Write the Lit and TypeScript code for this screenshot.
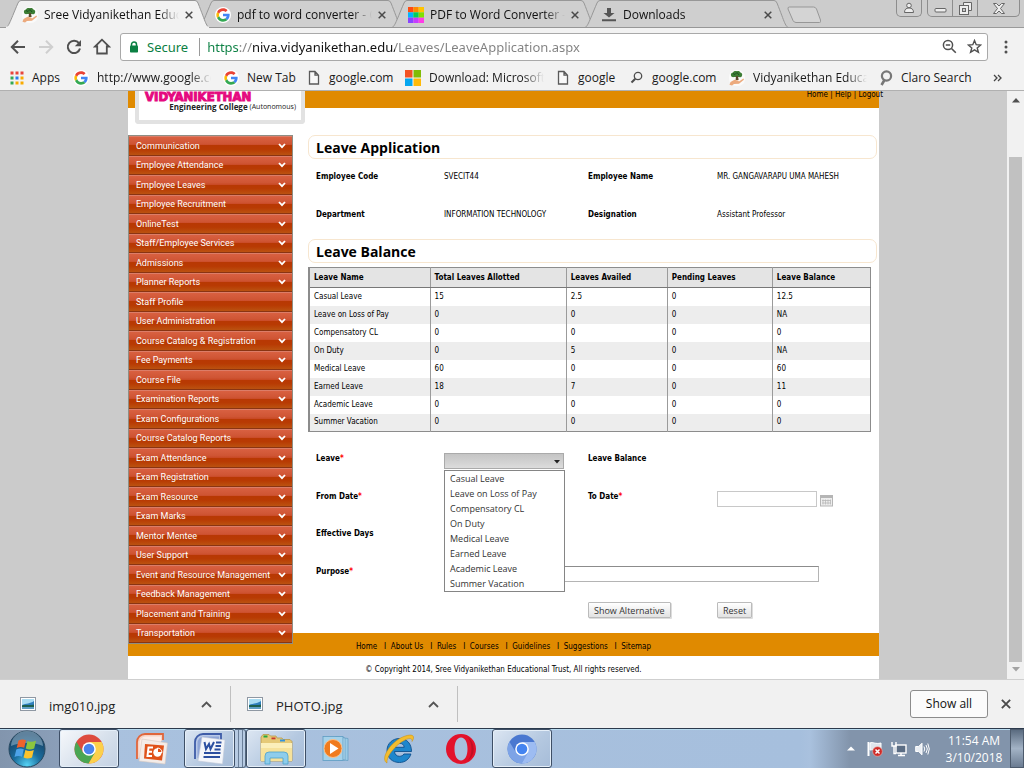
import { LitElement, html, svg, css, nothing, TemplateResult } from "lit";
import { customElement } from "lit/decorators.js";
import { classMap } from "lit/directives/class-map.js";

const icon = (w: number, h: number, box: string, body: unknown) =>
  html`<svg width=${w} height=${h} viewBox=${box} aria-hidden="true">${body}</svg>`;

const googleIcon = () => icon(16, 16, "0 0 48 48", svg`
  <circle cx="24" cy="24" r="24" fill="#fff"/>
  <path fill="#fbbc05" d="M6.3 14.7C4.800 17.500 4 20.600 4 24s.8 6.500 2.200 9.100l6.600-5.100c-.5-1.300-.8-2.600-.8-4s.3-3.200.9-4.500z"/>
  <path fill="#ea4335" d="M6.306,14.691l6.571,4.819C14.655,15.108,18.961,12,24,12c3.059,0,5.842,1.154,7.961,3.039l5.657-5.657C34.046,6.053,29.268,4,24,4C16.318,4,9.656,8.337,6.306,14.691z"/>
  <path fill="#34a853" d="M24,44c5.166,0,9.86-1.977,13.409-5.192l-6.19-5.238C29.211,35.091,26.715,36,24,36c-5.202,0-9.619-3.317-11.283-7.946l-6.522,5.025C9.505,39.556,16.227,44,24,44z"/>
  <path fill="#4285f4" d="M43.611,20.083H24v8h11.303c-0.792,2.237-2.231,4.166-4.087,5.571l6.19,5.238C36.971,39.205,44,34,44,24C44,22.659,43.862,21.35,43.611,20.083z"/>`);

const treeIcon = () => icon(16, 16, "0 0 16 16", svg`
  <rect width="16" height="16" rx="7" fill="#fafafa"/>
  <path d="M2 5.500c-.6-2 1-3 2-3 .8-1.800 3-1.800 4-1.300 1.600-.6 3 .2 3.400 1.300 1.600.4 2.200 2 1.600 3.200-.3 1.300-2 1.800-3.400 1.400H5c-1.500.3-2.800-.4-3-1.600z" fill="#3c7d34"/>
  <path d="M4 3.500l2 1 2-2 2 2.500" stroke="#1d5220" fill="none"/>
  <path d="M7 6h2l.6 4H6.600z" fill="#5b4a2c"/>
  <path d="M.5 14.800l1-2.800 4-2.200 3.500.6 1 1 4-2.600c1-.3 1.300.4.6 1.100L10 13.700l-5 .4-2 1.500z" fill="#ecaa7d"/>`);

const pageIcon = () => icon(14, 16, "0 0 14 16", svg`
  <path d="M2.500 1.500h5.500l3.500 3.700v8.800h-9zM8 1.500v3.700h3.500" fill="#f8f8f8" stroke="#5a5a5a" stroke-width="1.300"/>`);

const lensIcon = () => icon(14, 16, "0 0 14 16", svg`
  <circle cx="8" cy="6" r="3.700" fill="none" stroke="#4e4e4e" stroke-width="1.300"/>
  <path d="M5.300 8.700L1.500 12.500" stroke="#4e4e4e" stroke-width="2"/>`);

const claroIcon = () => icon(14, 16, "0 0 14 16", svg`
  <circle cx="7.500" cy="6" r="4.600" fill="none" stroke="#777" stroke-width="2.200"/>
  <path d="M5.500 10L2.500 15" stroke="#777" stroke-width="2.600"/>`);

const windowsIcon = () => icon(16, 16, "0 0 16 16", svg`
  <path fill="#f35325" d="M0 0h7.500v7.500H0z"/><path fill="#81bc06" d="M8.500 0H16v7.500H8.500z"/>
  <path fill="#05a6f0" d="M0 8.500h7.500V16H0z"/><path fill="#ffba08" d="M8.500 8.500H16V16H8.500z"/>`);

const appsIcon = () => icon(14, 14, "0 0 14 14",
  ["#e8453c", "#e8453c", "#e8453c", "#34a853", "#2a7cf0", "#f9ab00", "#34a853", "#f9ab00", "#f9ab00"].map(
    (c, i) => svg`<rect x=${(i % 3) * 5 + 0.5} y=${Math.floor(i / 3) * 5 + 0.5} width="3" height="3" fill=${c}/>`));

const mosaicIcon = () => icon(16, 16, "0 0 16 16",
  ["#ff4b12", "#ff8a00", "#ffc400", "#00b4ff", "#00cf5e", "#7fe000", "#8a44ff", "#c63cff", "#ff3ce6"].map(
    (c, i) => svg`<rect x=${(i % 3) * 5.34} y=${Math.floor(i / 3) * 5.34} width="5.340" height="5.340" fill=${c}/>`));

const downloadIcon = () => icon(16, 16, "0 0 16 16", svg`
  <path d="M6 1h4v5h3.500L8 10.500 2.500 6H6zM1 12.200h14v2H1z" fill="#555"/>`);

const closeIcon = (size = 8) => icon(size, size, "0 0 8 8", svg`
  <path d="M.7.7l6.600 6.600M7.300.7L.7 7.300" stroke="#4a4a4a" stroke-width="1.500"/>`);

const pictureIcon = () => icon(16, 14, "0 0 16 14", svg`
  <rect x=".5" y=".5" width="15" height="13" fill="#fff" stroke="#8f98a3"/>
  <rect x="2" y="2" width="12" height="10" fill="#2f7fbd"/>
  <path d="M2 2h12v2c-4 3-8 2-12 4z" fill="#a9dcf2"/>
  <path d="M2 8.500c3-1.500 7 .5 12-1V10H2z" fill="#1d5f4d"/><path d="M2 10h12v2H2z" fill="#5f9fc4"/>`);

const chromeIcon = (a: string, b: string, c: string, core: string, hub: string) => icon(30, 30, "0 0 30 30", svg`
  <circle cx="15" cy="15" r="14.500" fill=${a}/>
  <path d="M15 15L21.500 18.500 14.600 29.500A14.500 14.500 0 0 1 2.400 7.800L9 18.500z" fill=${b}/>
  <path d="M27.700 8H15l6 10.500L14.600 29.500A14.500 14.500 0 0 0 27.700 8z" fill=${c}/>
  <circle cx="15" cy="15" r="6.800" fill=${hub}/><circle cx="15" cy="15" r="5.300" fill=${core}/>`);

const orbIcon = () => icon(38, 38, "0 0 38 38", svg`
  <defs><radialGradient id="orb" cx=".5" cy=".95" r=".85"><stop offset="0" stop-color="#55d3f5"/><stop offset=".45" stop-color="#1a6e9e"/><stop offset="1" stop-color="#173f63"/></radialGradient></defs>
  <circle cx="19" cy="19" r="18" fill="url(#orb)" stroke="#27485f"/>
  <path d="M3 16a16 15 0 0 1 32 0c-8-4-24-4-32 0z" fill="#b9d4e4" opacity=".45"/>
  <path d="M10.500 10.500c3-1.500 5-1.400 7.500-.2l-1.800 7.500c-2.500-1.200-5-1-7.500.2z" fill="#f0622c"/>
  <path d="M19.500 11c3 1.300 5.500 1 8.500-.2l-1.800 7.600c-3 1.200-5.500 1.400-8.400.1z" fill="#8cc63f"/>
  <path d="M8.300 19.500c2.500-1.200 5-1.400 7.500-.2L14 26.800c-2.500-1.200-5-1-7.500.2z" fill="#4da3e8"/>
  <path d="M17.400 20c3 1.300 5.500 1.100 8.400-.1L24 27.500c-3 1.200-5.500 1.400-8.400.1z" fill="#fcc32c"/>`);

const pptIcon = () => icon(32, 32, "0 0 32 32", svg`
  <path d="M1 26V9a8 8 0 0 1 8-8h18v6" fill="#f7d3c5" stroke="#e0663c" stroke-width="1.800"/>
  <path d="M3.500 25V10a6.500 6.500 0 0 1 6-6.500h15.500V9L9 27z" fill="#fff" opacity=".6"/>
  <path d="M6 6l25.500 4-2.500 21L3 28z" fill="#f4ece8" stroke="#d9c9c1" stroke-width=".6"/>
  <path d="M9 11l19 1.500-2 15-18-2z" fill="#e0521a"/>
  <path d="M17 14.500h-4.500l-1 8.500h4.500M12.500 18.700h3.500" fill="none" stroke="#fff" stroke-width="2"/>
  <circle cx="21.500" cy="19.500" r="4.200" fill="#fff"/><path d="M21.500 19.500V15a4.500 4.500 0 0 1 4.500 4.500z" fill="#e0521a" stroke="#fff"/>`);

const wordIcon = () => icon(32, 32, "0 0 32 32", svg`
  <path d="M1 26V9a8 8 0 0 1 8-8h18v6" fill="#b9c9e8" stroke="#3e5ca8" stroke-width="1.800"/>
  <path d="M3.500 25V10a6.500 6.500 0 0 1 6-6.500h15.500V9L9 27z" fill="#6f8cc9" opacity=".6"/>
  <path d="M8 4l23 3-2.500 24L4 28z" fill="#f4f6fa" stroke="#c3cad8" stroke-width=".6"/>
  <path d="M10.500 9l1.500 7 3-5 1.500 5 3.500-7" fill="none" stroke="#2b4fa0" stroke-width="2"/>
  <path d="M22 9.500h5.500M21.500 13H27M20.500 16.500h6M10 20h16.500M9.500 24h16.500" stroke="#2b4fa0" stroke-width="2"/>`);

const folderIcon = () => icon(34, 32, "0 0 34 32", svg`
  <path d="M2 4l2-2.500h6L11.500 3H17l1 2h5l1 1.500h7l2 2V28H2z" fill="#e5c977" stroke="#b99a4a" stroke-width=".8"/>
  <path d="M4.500 2.500h4v2h-4z" fill="#25a83a"/><path d="M12.500 4.500h4v1.800h-4z" fill="#c8392b"/><path d="M21 6.500h5v2h-5z" fill="#3494dd"/>
  <path d="M2 10h31v18H2z" fill="#f6e29b"/><path d="M2 10h31v5H2z" fill="#fbefba"/>
  <path d="M6 31v-8a4 4 0 0 1 4-4h15a4 4 0 0 1 4 4v8h-5v-6H11v6z" fill="#8ecdec" stroke="#4da1cc" stroke-width=".8"/>`);

const mediaIcon = () => icon(30, 28, "0 0 30 28", svg`
  <path d="M16 2l10 1.500v22l-10-1z" fill="#9ccbe6" stroke="#5e9cc2" stroke-width=".7"/>
  <path d="M14 1.500l9 1.500v22l-9-1z" fill="#b7dcf0" stroke="#5e9cc2" stroke-width=".7"/>
  <rect x="1" y="1.500" width="20" height="24" fill="#a5d2ea" stroke="#5e9cc2" stroke-width=".8"/>
  <circle cx="11" cy="13.500" r="9" fill="#f07b1e" stroke="#fbc08a"/><path d="M8 8l8.500 5.500L8 19z" fill="#fff"/>`);

const ieIcon = () => icon(34, 32, "0 0 34 32", svg`
  <path d="M29.500 18.500H12.500c.3 3.200 2.300 4.800 5 4.800 2 0 3.500-.8 4.400-2.300h7C27.500 26 23 29.500 17.500 29.500 10 29.500 5 24.500 5 17.500S10.500 5.500 17.500 5.500c7.500 0 12 5.200 12 13zM12.700 14.300h9.500c-.3-2.500-2-4-4.600-4-2.700 0-4.400 1.500-4.900 4z" fill="#1e86cc" stroke="#0f4f8c" stroke-width=".9"/>
  <path d="M5 30C-1 27 5 14 16 6.500 23 2 31 .5 31.500 4c.2 1.500-.5 3-1.500 4.500.5-3-2-4-7-1.500C13 12 4 24 5 30z" fill="#f3bd2f" stroke="#c68a12" stroke-width=".5"/>`);

const operaIcon = () => icon(32, 32, "0 0 32 32", svg`
  <path fill-rule="evenodd" d="M16 1a15 15 0 1 0 0 30 15 15 0 0 0 0-30zm0 3.500c4.200 0 6.500 5 6.500 11.500S20.200 27.500 16 27.500 9.500 22.500 9.500 16 11.800 4.500 16 4.500z" fill="#e3122b"/>
  <path d="M22 3.500a15 15 0 0 1 0 25c3-3 4.500-7.500 4.500-12.500S25 6.500 22 3.500z" fill="#a70f1f" opacity=".6"/>`);

interface TabInfo { title: string; icon: () => TemplateResult; active?: boolean }

@customElement("browser-tabs")
class BrowserTabs extends LitElement {
  static styles = css`
    :host { display: flex; height: 28px; background: #ccc; padding-left: 5px; font: 12px/18px "Open Sans", sans-serif; color: #111; box-shadow: inset 0 -1px #9a9a9a; }
    .tab { position: relative; flex: 0 1 205px; min-width: 60px; margin-right: -12px; display: flex; align-items: center; gap: 6px; padding: 2px 17px 0; box-sizing: border-box; }
    .tab.active { z-index: 2; }
    .shape { position: absolute; inset: 0; width: 100%; height: 100%; }
    .tab > * { flex: none; z-index: 1; }
    .tab > .shape { z-index: 0; }
    .tab > .title { flex: 1 1 0; overflow: hidden; white-space: nowrap; mask-image: linear-gradient(90deg, #000 85%, transparent); }
    button { border: 0; background: none; padding: 0; display: flex; }
    .new { margin-left: 10px; padding-top: 2px; align-self: center; }
    .controls { margin-left: auto; display: flex; gap: 5px; padding-right: 4px; }
    .group { display: flex; height: 17px; border: 1px solid #8d8d8d; border-top: 0; border-radius: 0 0 5px 5px; box-sizing: border-box; background: #cdcdcd; }
    .group button { width: 25px; justify-content: center; align-items: center; border-left: 1px solid #8d8d8d; }
    .group button:first-child { border-left: 0; width: 24px; }
    .group .wide { width: 42px; }
    svg { display: block; }
  `;
  private tabs: TabInfo[] = [
    { title: "Sree Vidyanikethan Educ", icon: treeIcon, active: true },
    { title: "pdf to word converter - G", icon: googleIcon },
    { title: "PDF to Word Converter -", icon: mosaicIcon },
    { title: "Downloads", icon: downloadIcon },
  ];
  render() {
    return html`
      ${this.tabs.map((t) => html`
        <div class=${classMap({ tab: true, active: !!t.active })}>
          <svg class="shape" viewBox="0 0 205 28" preserveAspectRatio="none">
            <path d="M-1 28.500C4 27 4 24 13 3q1-2.500 3-2.500H190q2 0 3 2.500C201 23 201 27 206 28.500z" fill=${t.active ? "#f2f2f2" : "#cfcfcf"} stroke="#979797"/>
            ${t.active ? svg`<path d="M1 27.500h203" stroke="#f2f2f2" stroke-width="2"/>` : svg`<path d="M0 27.500h205" stroke="#979797"/>`}
          </svg>
          ${t.icon()}<span class="title">${t.title}</span>
          <button aria-label="Close tab">${closeIcon()}</button>
        </div>`)}
      <button class="new" aria-label="New tab">${icon(34, 18, "0 0 34 18", svg`<path d="M2.500 1h24q2 0 3 2l4 11q1 2.500-1 2.500H9q-2 0-3-2L1 3q-.5-2 1.500-2z" fill="#d4d4d4" stroke="#979797"/>`)}</button>
      <div class="controls">
        <div class="group"><button aria-label="User">${icon(12, 12, "0 0 12 12", svg`<circle cx="6" cy="3.500" r="2.300" fill="#eee" stroke="#666"/><path d="M1.500 10.500c0-3 1.500-4.500 4.500-4.500s4.500 1.500 4.500 4.500z" fill="#eee" stroke="#666"/>`)}</button></div>
        <div class="group">
          <button aria-label="Minimize">${icon(13, 12, "0 0 13 12", svg`<rect x="1" y="6.500" width="11" height="3.500" rx="1" fill="#eee" stroke="#666"/>`)}</button>
          <button aria-label="Restore">${icon(13, 13, "0 0 13 13", svg`<path d="M4.500.5h8v8h-3v-5h-5z" fill="#eee" stroke="#666"/><rect x=".5" y="3.500" width="9" height="9" fill="#eee" stroke="#666"/><rect x="3.500" y="6.500" width="3" height="3" fill="#ccc" stroke="#666"/>`)}</button>
          <button class="wide" aria-label="Close">${icon(12, 11, "0 0 12 11", svg`<path d="M.5.5h3L6 3 8.500.5h3l-4 5 4 5h-3L6 8l-2.500 2.500h-3l4-5z" fill="#eee" stroke="#666"/>`)}</button>
        </div>
      </div>`;
  }
}

@customElement("browser-toolbar")
class BrowserToolbar extends LitElement {
  static styles = css`
    :host { display: block; background: #f2f2f2; border-bottom: 1px solid #b0b0b0; font-family: "Open Sans", sans-serif; color: #1a1a1a; }
    .bar { display: flex; align-items: center; height: 37px; padding: 0 9px; gap: 10px; }
    .bar > button { width: 18px; height: 18px; }
    button { border: 0; background: none; padding: 0; display: flex; align-items: center; justify-content: center; }
    .omni { flex: 1; min-width: 0; display: flex; align-items: center; height: 28px; box-sizing: border-box; border: 1px solid #a9a9a9; border-radius: 3px; background: #fff; padding: 0 5px 0 8px; margin: 0 -1px; }
    .secure { color: #0b8043; font: 13px/18px "Noto Sans", sans-serif; margin: 0 11px 0 8px; }
    .url { flex: 1; min-width: 0; height: 18px; border: 0; border-left: 1px solid #9a9a9a; padding: 0 0 0 7px; outline: 0; font: 13px/18px "Noto Sans", sans-serif; color: #222;
      background: linear-gradient(90deg, #0b8043 39px, #808080 39px, #808080 52px, #111 52px, #111 195px, #808080 195px); -webkit-background-clip: text; background-clip: text; -webkit-text-fill-color: transparent; }
    .omni button { margin-left: 10px; }
    .marks { display: grid; grid-template-columns: 63px 150px 84px 98px 151px 74px 99px 150px 111px 1fr; align-items: center; height: 25px; padding: 0 10px; font-size: 12px; line-height: 16px; }
    .marks a { display: flex; align-items: center; gap: 8px; color: inherit; text-decoration: none; white-space: nowrap; min-width: 0; }
    .marks .fade { padding-right: 12px; }
    .marks .fade span { overflow: hidden; mask-image: linear-gradient(90deg, #000 82%, transparent); }
    .marks button { justify-self: start; padding-left: 3px; }
    svg { display: block; flex: none; }
  `;
  private marks: [string, () => TemplateResult, boolean][] = [
    ["Apps", appsIcon, false],
    ["http://www.google.co", googleIcon, true],
    ["New Tab", googleIcon, false],
    ["google.com", pageIcon, false],
    ["Download: Microsoft", windowsIcon, true],
    ["google", pageIcon, false],
    ["google.com", lensIcon, false],
    ["Vidyanikethan Educat", treeIcon, true],
    ["Claro Search", claroIcon, false],
  ];
  render() {
    return html`
      <div class="bar">
        <button aria-label="Back">${icon(16, 16, "0 0 16 16", svg`<path d="M15 8H2.500M8 1.800L1.800 8 8 14.200" fill="none" stroke="#505050" stroke-width="2"/>`)}</button>
        <button aria-label="Forward">${icon(16, 16, "0 0 16 16", svg`<path d="M1 8h12.500M8 1.800L14.200 8 8 14.200" fill="none" stroke="#cfcfcf" stroke-width="2"/>`)}</button>
        <button aria-label="Reload">${icon(16, 16, "0 0 16 16", svg`<path d="M13 4.200A6.200 6.200 0 1 0 14 9.500" fill="none" stroke="#505050" stroke-width="2"/><path d="M15 1v6.200H8.800z" fill="#505050"/>`)}</button>
        <button aria-label="Home">${icon(18, 17, "0 0 18 17", svg`<path d="M9 1.700L2 8.500h2.200v7h9.600v-7H16z" fill="none" stroke="#505050" stroke-width="1.800"/>`)}</button>
        <div class="omni">
          ${icon(10, 12, "0 0 10 12", svg`<path d="M2.500 5V3.500a2.500 2.500 0 0 1 5 0V5" fill="none" stroke="#0b8043" stroke-width="1.500"/><rect x="1" y="4.500" width="8" height="7" rx=".8" fill="#0b8043"/>`)}
          <span class="secure">Secure</span>
          <input class="url" aria-label="Address" value="https://niva.vidyanikethan.edu/Leaves/LeaveApplication.aspx" />
          <button aria-label="Zoom">${icon(15, 15, "0 0 15 15", svg`<circle cx="6" cy="6" r="4.600" fill="none" stroke="#505050" stroke-width="1.500"/><path d="M3.800 6h4.400M9.500 9.500l4.300 4.300" stroke="#505050" stroke-width="1.600"/>`)}</button>
          <button aria-label="Bookmark">${icon(15, 15, "0 0 15 15", svg`<path d="M7.500 1.500l1.700 4.200 4.500.3-3.500 2.900 1.200 4.400-3.900-2.500-3.900 2.500 1.200-4.400L1.300 6l4.500-.3z" fill="none" stroke="#505050" stroke-width="1.400"/>`)}</button>
        </div>
        <button aria-label="Menu">${icon(4, 14, "0 0 4 14", svg`<circle cx="2" cy="2" r="1.500" fill="#505050"/><circle cx="2" cy="7" r="1.500" fill="#505050"/><circle cx="2" cy="12" r="1.500" fill="#505050"/>`)}</button>
      </div>
      <nav class="marks">
        ${this.marks.map(([text, glyph, fade]) => html`<a href="#" class=${fade ? "fade" : nothing}>${glyph()}<span>${text}</span></a>`)}
        <button aria-label="More bookmarks">${icon(9, 8, "0 0 9 8", svg`<path d="M1 1l3 3-3 3M5 1l3 3-3 3" fill="none" stroke="#444" stroke-width="1.300"/>`)}</button>
      </nav>`;
  }
}

@customElement("side-menu")
class SideMenu extends LitElement {
  static styles = css`
    :host { display: block; }
    ul { list-style: none; margin: 0; padding: 0; border: 1px solid #8e8e84; }
    li { height: 19px; }
    li:nth-child(odd) { height: 20px; }
    a { display: flex; align-items: center; justify-content: space-between; height: 100%; box-sizing: border-box; padding: 0 6px 0 7px; border-bottom: 1px solid #8a3412; color: #fff; text-decoration: none; font: 9px/16px "Roboto", sans-serif; white-space: nowrap;
      background: linear-gradient(#da6243 0, #cf5534 40%, #c94a26 50%, #b83803 50%, #b83a03 70%, #bb5210 100%); box-shadow: inset 0 1px #dc7d68; }
  `;
  private items = ["Communication", "Employee Attendance", "Employee Leaves", "Employee Recruitment", "OnlineTest", "Staff/Employee Services", "Admissions", "Planner Reports", "Staff Profile", "User Administration", "Course Catalog & Registration", "Fee Payments", "Course File", "Examination Reports", "Exam Configurations", "Course Catalog Reports", "Exam Attendance", "Exam Registration", "Exam Resource", "Exam Marks", "Mentor Mentee", "User Support", "Event and Resource Management", "Feedback Management", "Placement and Training", "Transportation"];
  render() {
    return html`<ul>${this.items.map((t) => html`<li><a href="#">${t}
      ${t === "Staff Profile" ? nothing : icon(8, 6, "0 0 8 6", svg`<path d="M1 1l3 3.200L7 1" fill="none" stroke="#fff" stroke-width="1.800"/>`)}</a></li>`)}</ul>`;
  }
}

const balances: string[][] = [
  ["Casual Leave", "15", "2.5", "0", "12.5"],
  ["Leave on Loss of Pay", "0", "0", "0", "NA"],
  ["Compensatory CL", "0", "0", "0", "0"],
  ["On Duty", "0", "5", "0", "NA"],
  ["Medical Leave", "60", "0", "0", "60"],
  ["Earned Leave", "18", "7", "0", "11"],
  ["Academic Leave", "0", "0", "0", "0"],
  ["Summer Vacation", "0", "0", "0", "0"],
];

@customElement("leave-form")
class LeaveForm extends LitElement {
  static styles = css`
    :host { display: block; font: 8px/16px "DejaVu Sans Condensed", "DejaVu Sans", sans-serif; color: #000; }
    h2 { margin: 0 0 10px; height: 24px; box-sizing: border-box; border: 1px solid #f7e6cf; border-radius: 7px; padding: 0 7px; font: bold 14px/23px "Open Sans", sans-serif; }
    .grid { display: grid; grid-template-columns: 128px 144px 129px 1fr; padding-left: 8px; }
    .info { grid-auto-rows: 38px; margin: 0; }
    .info dd { margin: 0; white-space: nowrap; }
    .info dt, label, .name { font-weight: bold; }
    h2.second { margin: -6px 0 4px; }
    table { width: calc(100% - 6px); border-collapse: collapse; table-layout: fixed; border: 1px solid #8c8c8c; border-left-width: 2px; line-height: 12px; }
    th { height: 20px; background: #e4e4e4; border-bottom: 1px solid #777; }
    td { height: 18px; }
    th, td { box-sizing: border-box; padding: 0 4px; text-align: left; border-left: 1px solid #9b9b9b; white-space: nowrap; }
    tr:nth-child(even) td { background: #ededed; }
    .form { grid-template-rows: 38px 37px 38px 32px; margin-top: 19px; }
    label i { color: #f00; font-style: normal; }
    .combo { position: relative; width: 120px; }
    select { display: block; appearance: none; width: 120px; height: 16px; margin: 0; border: 1px solid #aaa; border-radius: 0; background: linear-gradient(#c4c4c4, #dcdcdc); }
    .combo svg { position: absolute; right: 4px; top: 7px; }
    .list { position: absolute; z-index: 3; top: 17px; left: 0; right: -1px; margin: 0; padding: 0; border: 1px solid #858585; background: #fff; list-style: none; font: 9px/15px "Open Sans", sans-serif; color: #333; }
    .list li { padding: 0 5px; }
    .date { display: flex; align-items: flex-start; gap: 3px; }
    input { box-sizing: border-box; height: 16px; border: 1px solid #c8c8c8; margin: 0; padding: 0 3px; font: inherit; }
    .date input { width: 100px; }
    .field { margin-top: 2px; }
    .wide { grid-column: 2 / -1; }
    .wide input { display: block; width: 100%; max-width: 375px; border-color: #8c8c8c #b4b4b4 #b4b4b4; }
    button.cal { width: 13px; height: 16px; padding: 3px 0 0; border: 0; background: none; display: block; box-shadow: none; }
    button { justify-self: start; height: 16px; padding: 0 5px; border: 1px solid #bbb; border-radius: 1px; background: linear-gradient(#fff, #e2e2e2); font: 9px/13px "Open Sans", sans-serif; color: #333; white-space: nowrap; box-shadow: 1px 1px #ddd; }
    .first { grid-column: 3; }
    .actions { margin-top: 6px; }
    svg { display: block; }
  `;
  render() {
    const heads = ["Leave Name", "Total Leaves Allotted", "Leaves Availed", "Pending Leaves", "Leave Balance"];
    return html`
      <h2>Leave Application</h2>
      <dl class="grid info">
        <dt>Employee Code</dt><dd>SVECIT44</dd><dt>Employee Name</dt><dd>MR. GANGAVARAPU UMA MAHESH</dd>
        <dt>Department</dt><dd>INFORMATION TECHNOLOGY</dd><dt>Designation</dt><dd>Assistant Professor</dd>
      </dl>
      <h2 class="second">Leave Balance</h2>
      <table>
        <colgroup><col width="121" /><col width="136" /><col width="101" /><col width="105" /><col width="98" /></colgroup>
        <thead><tr>${heads.map((h) => html`<th scope="col">${h}</th>`)}</tr></thead>
        <tbody>${balances.map((r) => html`<tr>${r.map((c) => html`<td>${c}</td>`)}</tr>`)}</tbody>
      </table>
      <form class="grid form" @submit=${(e: Event) => e.preventDefault()}>
        <label for="leave">Leave<i>*</i></label>
        <div class="combo field">
          <select id="leave"><option></option>${balances.map((r) => html`<option>${r[0]}</option>`)}</select>
          ${icon(6, 4, "0 0 6 4", svg`<path d="M0 0h6L3 3.500z" fill="#222"/>`)}
          <ul class="list">${balances.map((r) => html`<li>${r[0]}</li>`)}</ul>
        </div>
        <span class="name">Leave Balance</span><span></span>
        <label for="from">From Date<i>*</i></label>
        <div class="date"><input id="from" /></div>
        <label for="to">To Date<i>*</i></label>
        <div class="date field"><input id="to" />
          <button type="button" class="cal" aria-label="Pick a date">${icon(13, 12, "0 0 13 12", svg`<rect x=".5" y=".5" width="12" height="10.500" fill="#eee" stroke="#b5b5b5"/><path d="M0 2h13" stroke="#b5b5b5" stroke-width="2"/><path d="M3 4.500v5M5.500 4.500v5M8 4.500v5M10.500 4.500v5M2 5.500h9M2 8h9" stroke="#b8b8b8" stroke-width=".8"/>`)}</button>
        </div>
        <span class="name">Effective Days</span><span></span><span></span><span></span>
        <label for="purpose">Purpose<i>*</i></label>
        <div class="wide field"><input id="purpose" /></div>
        <button class="first actions">Show Alternative</button>
        <button type="reset" class="actions">Reset</button>
      </form>`;
  }
}

@customElement("college-page")
class CollegePage extends LitElement {
  static styles = css`
    :host { display: flex; flex: 1; min-height: 0; background: #cbcbcb; font: 8px/12px "DejaVu Sans Condensed", "DejaVu Sans", sans-serif; color: #000; }
    a { color: inherit; text-decoration: none; }
    .scroller { flex: 1; min-width: 0; overflow: hidden; }
    .site { max-width: 751px; margin: 0 auto; background: #fff; min-height: 100%; }
    header { display: flex; justify-content: space-between; align-items: flex-start; background: linear-gradient(#e08a00 17px, #fff 17px); padding-left: 7px; }
    .logo { box-sizing: border-box; width: 170px; height: 33px; margin-bottom: 11px; border: 4px solid #e2e2e2; border-top: 0; border-radius: 0 0 4px 4px; background: #fff; padding: 0 5px 0 6px; }
    .brand { color: #e5097f; font: bold 13px/11px "DejaVu Sans Condensed", "DejaVu Sans", sans-serif; -webkit-text-stroke: 1px #e5097f; }
    .sub { display: flex; justify-content: flex-end; gap: 2px; font: bold 8px/10px "Open Sans", sans-serif; color: #222; white-space: nowrap; }
    .sub span { font-weight: 500; font-size: 7px; }
    .top { margin: -2px -4px 0 0; white-space: nowrap; }
    .body { display: flex; align-items: flex-start; gap: 15px; }
    side-menu { flex: 0 0 165px; min-width: 0; margin-bottom: -11px; position: relative; z-index: 1; }
    leave-form { flex: 1; min-width: 0; padding-right: 2px; }
    footer { text-align: center; }
    .links { background: #e08a00; height: 23px; line-height: 27px; white-space: pre; }
    .copy { line-height: 27px; }
    .scrollbar { flex: 0 0 17px; box-sizing: border-box; background: #f1f1f1; display: flex; flex-direction: column; align-items: center; padding: 7px 0; }
    .thumb { width: 13px; flex: 1; margin: 54px 0 5px; background: #c1c1c1; }
  `;
  render() {
    const links = ["Home", "About Us", "Rules", "Courses", "Guidelines", "Suggestions", "Sitemap"];
    return html`
      <div class="scroller"><div class="site">
        <header>
          <div class="logo"><div class="brand">VIDYANIKETHAN</div><div class="sub">Engineering College <span>(Autonomous)</span></div></div>
          <nav class="top"><a href="#">Home</a> | <a href="#">Help</a> | <a href="#">Logout</a></nav>
        </header>
        <div class="body"><side-menu></side-menu><leave-form></leave-form></div>
        <footer>
          <nav class="links">${links.map((l, i) => html`${i ? "   I  " : ""}<a href="#">${l}</a>`)}</nav>
          <div class="copy">© Copyright 2014, Sree Vidyanikethan Educational Trust, All rights reserved.</div>
        </footer>
      </div></div>
      <div class="scrollbar">
        ${icon(8, 5, "0 0 8 5", svg`<path d="M0 4.500h8L4 0z" fill="#505050"/>`)}
        <div class="thumb"></div>
        ${icon(8, 5, "0 0 8 5", svg`<path d="M0 0h8L4 4.500z" fill="#a3a3a3"/>`)}
      </div>`;
  }
}

@customElement("download-shelf")
class DownloadShelf extends LitElement {
  static styles = css`
    :host { display: flex; align-items: center; height: 49px; box-sizing: border-box; border-top: 1px solid #cfcfcf; background: #f1f1f1; font: 13px/18px "Open Sans", sans-serif; color: #222; padding-right: 13px; }
    .item { flex: 0 1 227px; box-sizing: border-box; height: 36px; display: flex; align-items: center; gap: 13px; padding: 0 18px 0 16px; border-right: 1px solid #c0c0c0; }
    .item:first-child { flex-basis: 231px; padding-left: 20px; }
    .item span { flex: 1; padding-top: 4px; }
    .all { margin: 0 13px 0 auto; width: 78px; height: 28px; border: 1px solid #8c8c8c; border-radius: 3px; background: #fbfbfb; font: 12px/18px "Open Sans", sans-serif; color: #111; padding: 0; }
    .x { border: 0; background: none; padding: 0; display: flex; }
  `;
  render() {
    return html`
      ${["img010.jpg", "PHOTO.jpg"].map((f) => html`<div class="item">${pictureIcon()}<span>${f}</span>
        <button class="x" aria-label="Options">${icon(11, 7, "0 0 11 7", svg`<path d="M1 6l4.500-4.500L10 6" fill="none" stroke="#555" stroke-width="1.800"/>`)}</button></div>`)}
      <button class="all">Show all</button>
      <button class="x" aria-label="Close">${closeIcon(10)}</button>`;
  }
}

@customElement("task-bar")
class TaskBar extends LitElement {
  static styles = css`
    :host { display: flex; align-items: stretch; height: 40px; box-sizing: border-box; border-top: 1px solid #2c3a4c; box-shadow: inset 0 1px #b9dcf0; color: #fff; font: 12px/17px "Open Sans", sans-serif;
      background: linear-gradient(90deg, #8295ad 0, #8b9fb9 60px, #a9c1de 62px, #a6bfdd 800px, #a9c1de 810px, #8294ab 850px); }
    button { border: 0; background: none; padding: 0; display: flex; align-items: center; justify-content: center; color: inherit; }
    .start { width: 59px; padding-right: 5px; }
    .app { width: 62px; }
    .app.slides { width: 65px; }
    .app.open { width: 60px; border: 1px solid #3e4f66; border-radius: 3px; background: linear-gradient(135deg, #dce6f2, #b4c8e0 60%, #a6bcd8); box-shadow: inset 0 0 0 1px #e4eef8; }
    .app.current { background: linear-gradient(135deg, #f6f8fb, #d5dfeb 60%, #c3d1e3); }
    .app.open.word { width: 51px; }
    .stack { width: 11px; box-sizing: border-box; border: solid #56697f; border-width: 1px 1px 1px 0; background: repeating-linear-gradient(90deg, #b7cbe3 0 3px, #6a7f99 3px 4px); border-radius: 0 3px 3px 0; }
    .tray { margin-left: auto; display: flex; align-items: center; gap: 8px; padding-right: 4px; }
    .more { margin-right: 4px; display: flex; }
    .clock { text-align: center; width: 64px; margin-left: 4px; white-space: nowrap; }
    .peek { width: 14px; align-self: stretch; box-sizing: border-box; border: 1px solid #4d5b6d; background: linear-gradient(#5a6b80, #a3b3c6 50%, #6b7c92); }
  `;
  render() {
    return html`
      <button class="start" aria-label="Start">${orbIcon()}</button>
      <button class="app open current" aria-label="Chrome">${chromeIcon("#dd4b3e", "#4aa653", "#fcd04b", "#4b83ec", "#fff")}</button>
      <button class="app slides" aria-label="PowerPoint">${pptIcon()}</button>
      <button class="app open word" aria-label="Word">${wordIcon()}</button><span class="stack"></span>
      <button class="app open" aria-label="Explorer">${folderIcon()}</button>
      <button class="app" aria-label="Media Player">${mediaIcon()}</button>
      <button class="app" aria-label="Internet Explorer">${ieIcon()}</button>
      <button class="app" aria-label="Opera">${operaIcon()}</button>
      <button class="app open" aria-label="Chromium">${chromeIcon("#4a78d0", "#7da3e6", "#9dbcf2", "#4484f0", "#fff")}</button>
      <div class="tray">
        <button class="more" aria-label="Show hidden icons">${icon(8, 5, "0 0 8 5", svg`<path d="M0 4.500h8L4 .5z" fill="#fff"/>`)}</button>
        ${icon(16, 16, "0 0 16 16", svg`<path d="M1.500 1v14" stroke="#fff" stroke-width="2"/><path d="M3 2c3-1.500 5 1.500 11 0v7c-4 1.500-7-1.500-11 0z" fill="#dfe5ec" stroke="#fff"/><circle cx="10.500" cy="10.500" r="4.800" fill="#cf2a27" stroke="#f0b0a8" stroke-width=".6"/><path d="M8.500 8.500l4 4M12.500 8.500l-4 4" stroke="#fff" stroke-width="1.500"/>`)}
        ${icon(16, 16, "0 0 16 16", svg`<rect x="5" y="4" width="10" height="8" fill="#5b6d84" stroke="#fff" stroke-width="1.400"/><path d="M7 14.500h7M10 12v2" stroke="#fff" stroke-width="1.500"/><path d="M1 1v4h4V1M3 5v7.500h2" fill="none" stroke="#fff" stroke-width="1.400"/>`)}
        ${icon(15, 14, "0 0 15 14", svg`<path d="M.7 4.500h3L7 1.200v11.600L3.700 9.500h-3z" fill="#e8edf3" stroke="#fff"/><path d="M9 4.500q1.500 2.500 0 5M11 3q2.700 4 0 8M12.800 1.500q3 5.500 0 11" fill="none" stroke="#fff"/>`)}
        <div class="clock">11:54 AM<br />3/10/2018</div>
      </div>
      <button class="peek" aria-label="Show desktop"></button>`;
  }
}

@customElement("app-root")
class AppRoot extends LitElement {
  static styles = css`:host { display: flex; flex-direction: column; height: 100vh; overflow: hidden; }
    browser-tabs, browser-toolbar, download-shelf, task-bar { flex: none; }`;
  render() {
    return html`<browser-tabs></browser-tabs><browser-toolbar></browser-toolbar><college-page></college-page><download-shelf></download-shelf><task-bar></task-bar>`;
  }
}
